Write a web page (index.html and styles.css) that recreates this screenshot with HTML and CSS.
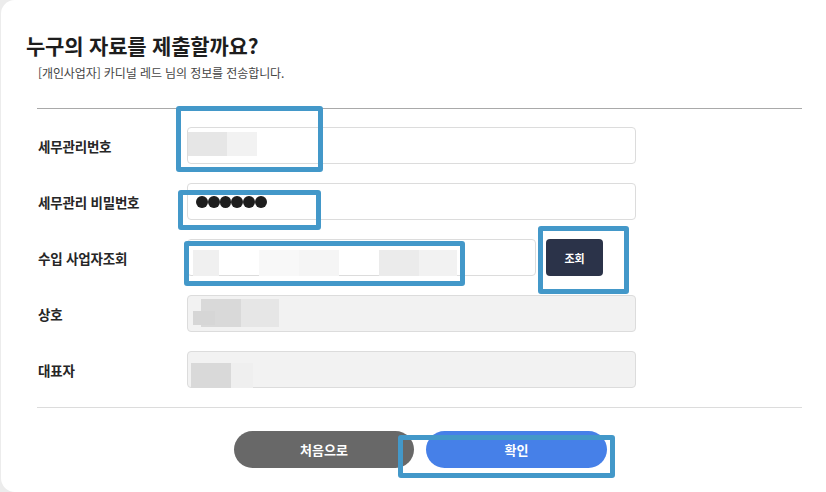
FILE: index.html
```html
<!DOCTYPE html>
<html lang="ko">
<head>
<meta charset="utf-8">
<link rel="stylesheet" href="styles.css">
</head>
<body>
<div class="modal">
  <h1 class="title">누구의 자료를 제출할까요?</h1>
  <p class="subtitle">[개인사업자] 카디널 레드 님의 정보를 전송합니다.</p>
  <div class="form">
    <div class="row">
      <span class="label">세무관리번호</span>
      <div class="field">
        <span class="blk" style="left:0;top:4px;width:39px;height:24px;background:#e6e6e6"></span>
        <span class="blk" style="left:39px;top:4px;width:30px;height:24px;background:#f2f2f2"></span>
      </div>
    </div>
    <div class="row">
      <span class="label">세무관리 비밀번호</span>
      <div class="field">
        <div class="dots"><i></i><i></i><i></i><i></i><i></i><i></i></div>
      </div>
    </div>
    <div class="row">
      <span class="label">수입 사업자조회</span>
      <div class="field short">
        <span class="blk" style="left:5px;top:10px;width:26px;height:26px;background:#f0f0f0"></span>
        <span class="blk" style="left:71px;top:10px;width:40px;height:26px;background:#f8f8f8"></span>
        <span class="blk" style="left:111px;top:10px;width:40px;height:26px;background:#f5f5f5"></span>
        <span class="blk" style="left:191px;top:10px;width:40px;height:26px;background:#ebebeb"></span>
        <span class="blk" style="left:231px;top:10px;width:38px;height:26px;background:#f2f2f2"></span>
      </div>
      <button class="search">조회</button>
    </div>
    <div class="row">
      <span class="label">상호</span>
      <div class="field readonly">
        <span class="blk" style="left:13px;top:3px;width:40px;height:28px;background:#d9d9d9"></span>
        <span class="blk" style="left:53px;top:3px;width:38px;height:28px;background:#e6e6e6"></span>
        <span class="blk" style="left:5px;top:15px;width:22px;height:14px;background:#d6d6d6"></span>
      </div>
    </div>
    <div class="row">
      <span class="label">대표자</span>
      <div class="field readonly">
        <span class="blk" style="left:3px;top:11px;width:40px;height:25px;background:#d9d9d9"></span>
        <span class="blk" style="left:43px;top:11px;width:22px;height:25px;background:#efefef"></span>
      </div>
    </div>
  </div>
  <div class="actions">
    <button class="btn back">처음으로</button>
    <button class="btn ok">확인</button>
  </div>
  <span class="mark" style="left:175px;top:106px;width:147px;height:66px"></span>
  <span class="mark" style="left:177px;top:190px;width:143px;height:40px"></span>
  <span class="mark" style="left:183px;top:241px;width:281px;height:45px"></span>
  <span class="mark" style="left:537px;top:226px;width:91px;height:68px"></span>
  <span class="mark" style="left:397px;top:435px;width:217px;height:43px"></span>
</div>
</body>
</html>
```

FILE: styles.css
```css
html, body {
  margin: 0;
  padding: 0;
}
body {
  background: #ececec;
  font-family: "Noto Sans CJK KR", "Noto Sans", sans-serif;
  color: #222;
  overflow: hidden;
  height: 492px;
}
.modal {
  position: relative;
  box-sizing: border-box;
  margin-left: 1px;
  height: 492px;
  background: #fff;
  border-top-left-radius: 14px;
  border-bottom-left-radius: 14px;
  padding: 30px 24px 0 36px;
}
.title {
  margin: 0 0 0 -11px;
  font-size: 21px;
  font-weight: 700;
  line-height: 31px;
  color: #1d1d1d;
  letter-spacing: -0.2px;
}
.subtitle {
  margin: 3px 0 0 1px;
  font-size: 12px;
  line-height: 17px;
  color: #444;
  letter-spacing: -0.1px;
}
.form {
  margin-top: 27px;
  border-top: 1px solid #a9a9a9;
  border-bottom: 1px solid #dcdcdc;
  padding: 18px 0 19px;
  display: flex;
  flex-direction: column;
  gap: 19px;
}
.row {
  display: flex;
  align-items: center;
  height: 37px;
  padding-left: 1px;
}
.label {
  width: 149px;
  font-size: 13.5px;
  font-weight: 700;
  color: #262626;
  letter-spacing: -0.2px;
}
.field {
  position: relative;
  width: 449px;
  height: 37px;
  box-sizing: border-box;
  border: 1px solid #dcdcdc;
  border-radius: 4px;
  background: #fff;
}
.field.short {
  width: 349px;
}
.field.readonly {
  background: #f2f2f2;
}
.blk {
  position: absolute;
  display: block;
}
.dots {
  display: flex;
  padding: 12px 0 0 8px;
}
.dots i {
  width: 11.8px;
  height: 11.8px;
  border-radius: 50%;
  background: #1e1e1e;
}
.search {
  margin-left: 10px;
  width: 57px;
  height: 37px;
  border: 0;
  border-radius: 4px;
  background: #2b3349;
  color: #fff;
  font-family: inherit;
  font-size: 11px;
  font-weight: 700;
}
.actions {
  display: flex;
  justify-content: center;
  gap: 12px;
  padding: 23px 0 0;
  margin-right: -2px;
}
.btn {
  width: 180px;
  height: 37px;
  border: 0;
  border-radius: 19px;
  color: #fff;
  font-family: inherit;
  font-size: 13px;
  font-weight: 700;
}
.back {
  background: #686868;
}
.ok {
  width: 181px;
  background: #4680e8;
}
.mark {
  position: absolute;
  display: block;
  box-sizing: border-box;
  border: 5px solid #4398c9;
  border-radius: 3px;
}
```
